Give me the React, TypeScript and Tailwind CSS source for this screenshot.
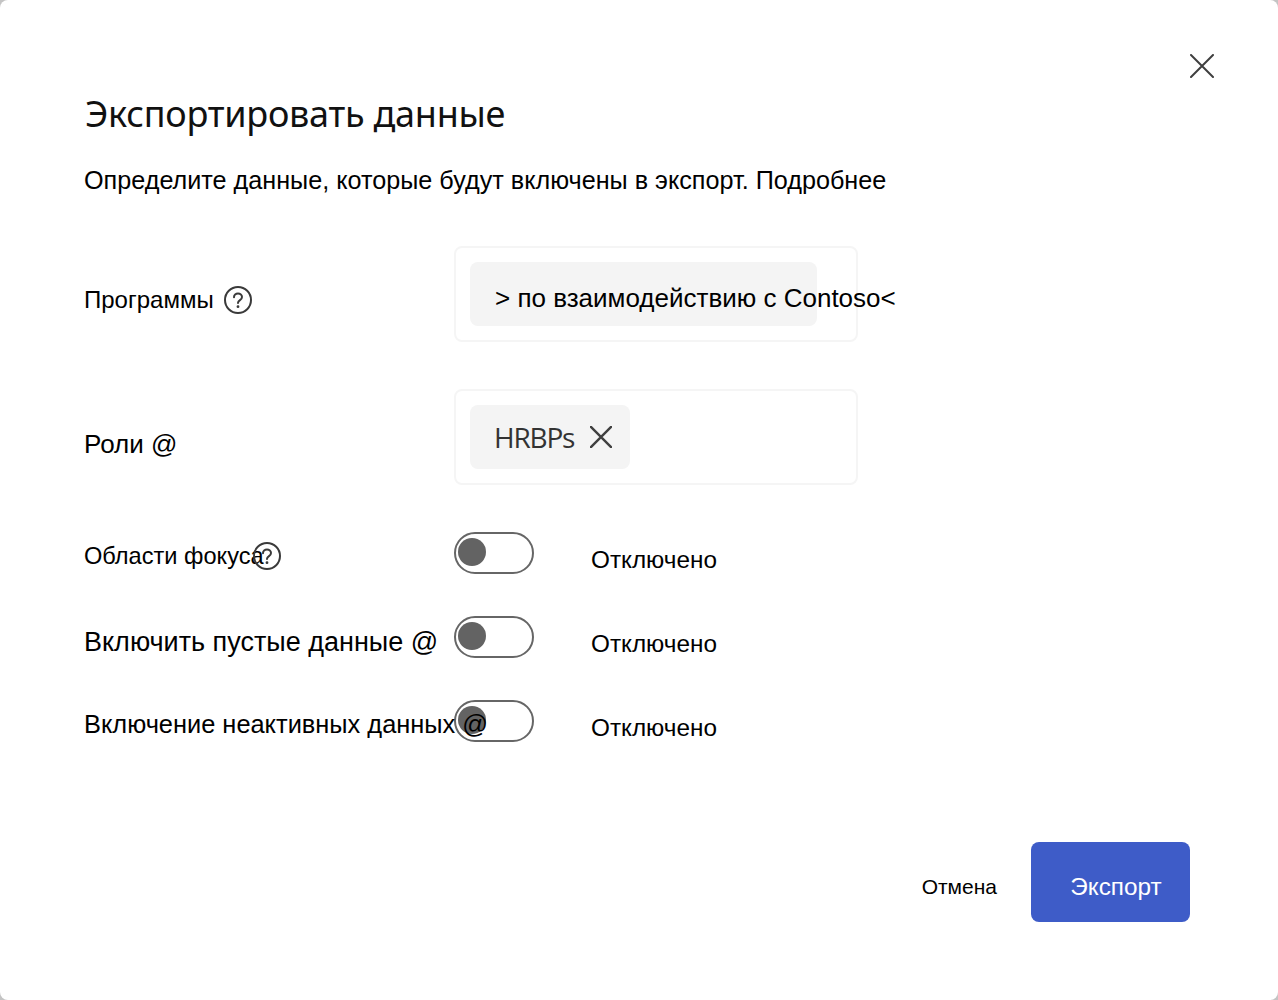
const sans = "font-['Liberation_Sans',Arial,sans-serif]";

const HelpIcon = ({ className = "" }: { className?: string }) => (
    <svg width="28" height="28" viewBox="0 0 28 28" fill="none" className={`shrink-0 ${className}`}>
        <circle cx="14" cy="14" r="13" stroke="#3a3a3a" strokeWidth="2" />
        <path d="M10 11.2c0-2.2 1.8-3.700 4-3.700s4 1.500 4 3.500c0 1.500-.8 2.300-2 3.100-1.300.9-2 1.500-2 3" stroke="#3a3a3a" strokeWidth="2" strokeLinecap="round" />
        <circle cx="14" cy="20.700" r="1.400" fill="#3a3a3a" />
    </svg>
);

const CloseIcon = ({ size, weight = 2 }: { size: number; weight?: number }) => (
    <svg width={size} height={size} viewBox="0 0 24 24" fill="none">
        <path d="M1 1l22 22M23 1L1 23" stroke="#3f3f3f" strokeWidth={weight} strokeLinecap="round" />
    </svg>
);

const Toggle = () => (
    <div className="flex items-center">
        <div className="w-[80px] h-[42px] rounded-full border-2 border-[#666666] pl-[2px] flex items-center">
            <div className="w-[28px] h-[28px] rounded-full bg-[#636363] -mt-[2px]"></div>
        </div>
        <span className={`${sans} text-[24.300px] leading-[28px] text-black ml-[57px] mt-[14px]`}>Отключено</span>
    </div>
);

const ToggleRow = ({ label, children }: { label: React.ReactNode; children?: React.ReactNode }) => (
    <div className="grid grid-cols-[370px_1fr] grid-rows-[42px]">
        <div className={`${sans} relative z-10 flex items-center whitespace-nowrap text-black`}>
            {label}
            {children}
        </div>
        <div className="flex">
            <Toggle />
        </div>
    </div>
);

const App = () => {
    return (
        <div className="w-full h-[1000px] bg-[#c4c4c4] overflow-hidden">
            <div className="h-full bg-white rounded-[8px] flex flex-col pl-[84px] pr-[88px]">
                <div className="flex justify-end pt-[54px] -mr-[24px]">
                    <button className="block">
                        <CloseIcon size={24} />
                    </button>
                </div>
                <h1 className="font-['Noto_Sans',sans-serif] text-[36px] tracking-[-0.25px] leading-[48px] text-[#111111] mt-[12px] ml-[1px] whitespace-nowrap">
                    Экспортировать данные
                </h1>
                <p className={`${sans} text-[25.200px] leading-[32px] text-black mt-[26px]`}>
                    Определите данные, которые будут включены в экспорт. Подробнее
                </p>

                <div className="grid grid-cols-[370px_1fr] mt-[50px]">
                    <div className={`${sans} flex items-center text-[24px] text-black gap-[10px] pt-[12px]`}>
                        Программы
                        <HelpIcon />
                    </div>
                    <div className="w-[404px] h-[96px] border-2 border-[#f5f5f5] rounded-[8px] p-[14px]">
                        <div className="w-[347px] h-[64px] bg-[#f4f4f4] rounded-[8px] flex items-center pl-[25px] whitespace-nowrap">
                            <span className={`${sans} text-[26px] text-black mt-[8px]`}>&gt; по взаимодействию с Contoso&lt;</span>
                        </div>
                    </div>
                </div>

                <div className="grid grid-cols-[370px_1fr] mt-[47px]">
                    <div className={`${sans} flex items-center text-[26px] text-black pt-[14px]`}>Роли @</div>
                    <div className="w-[404px] h-[96px] border-2 border-[#f5f5f5] rounded-[8px] p-[14px]">
                        <div className="w-[160px] h-[64px] bg-[#f4f4f4] rounded-[8px] flex items-center pl-[24px]">
                            <span className="font-['Open_Sans',sans-serif] w-[96px] text-[28px] tracking-[-1.200px] text-[#333333]">HRBPs</span>
                            <CloseIcon size={22} weight={2.600} />
                        </div>
                    </div>
                </div>

                <div className="flex flex-col gap-[42px] mt-[47px]">
                    <ToggleRow label={<span className="text-[23.600px] mt-[8px]">Области фокуса</span>}>
                        <HelpIcon className="-ml-[11px] mt-[6px]" />
                    </ToggleRow>
                    <ToggleRow label={<span className="text-[27px] mt-[10px]">Включить пустые данные @</span>} />
                    <ToggleRow label={<span className="text-[25.400px] mt-[6px]">Включение неактивных данных @</span>} />
                </div>

                <div className="flex justify-end items-center mt-[100px] gap-[34px]">
                    <button className={`${sans} text-[21px] text-black mt-[10px]`}>Отмена</button>
                    <button className={`${sans} w-[159px] h-[80px] bg-[#3e5cc8] rounded-[8px] text-[24.300px] text-white pl-[11px] pt-[10px]`}>
                        Экспорт
                    </button>
                </div>
            </div>
        </div>
    );
};

export default App;
